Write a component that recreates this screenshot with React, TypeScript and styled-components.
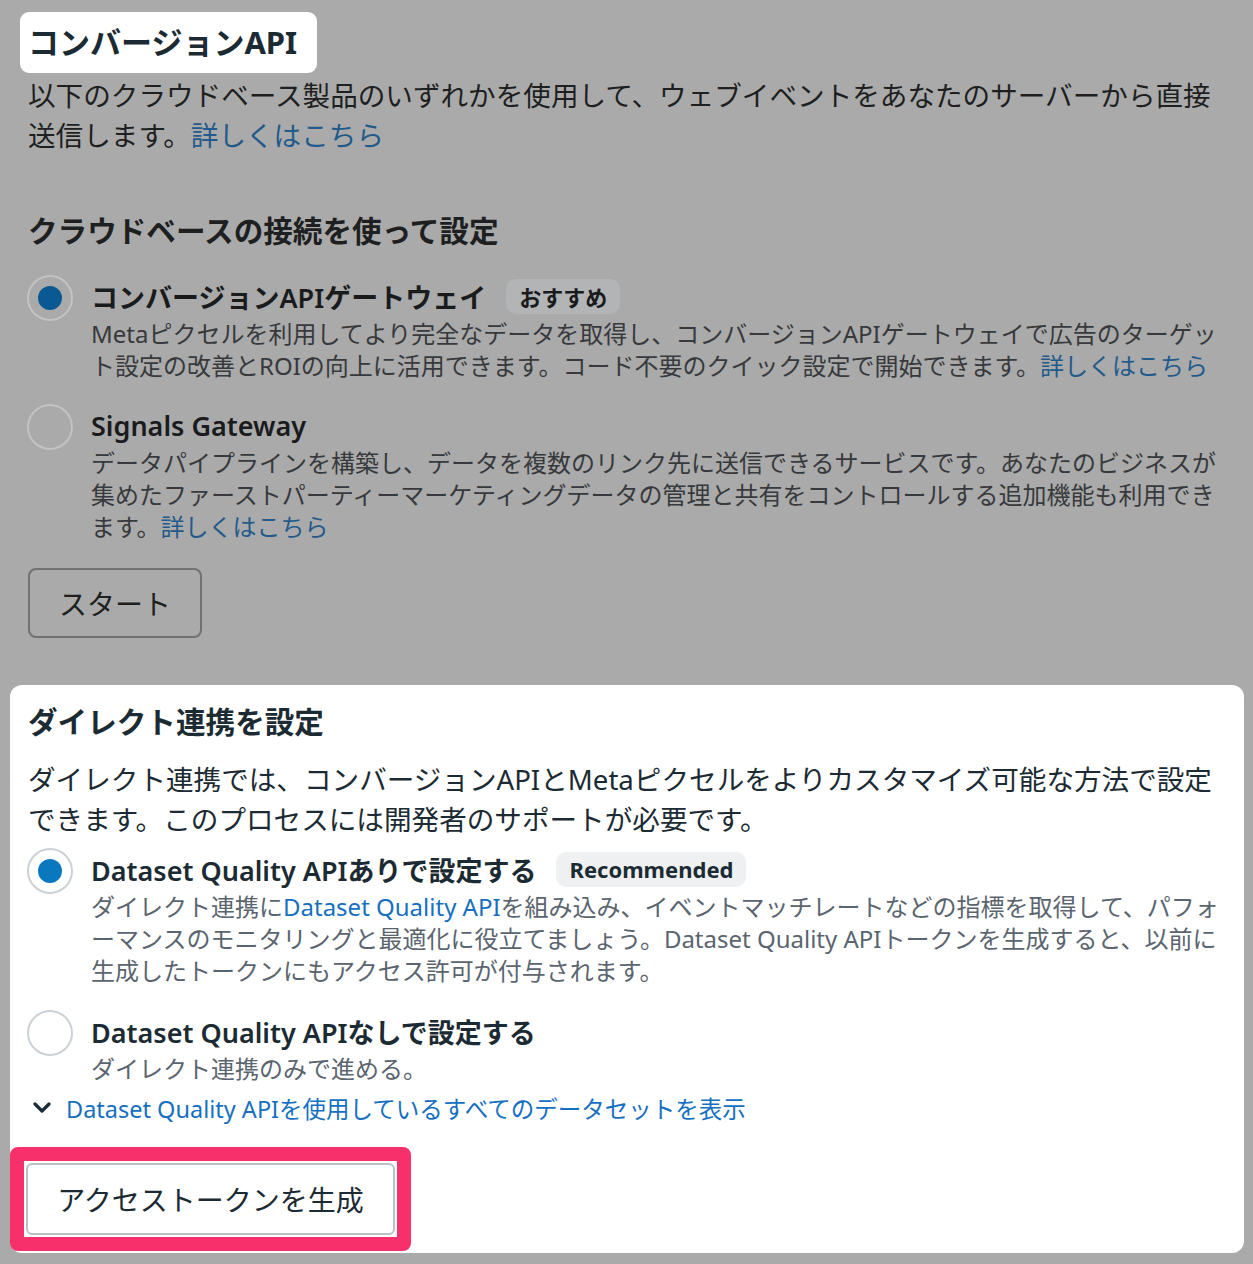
import styled, {createGlobalStyle, css} from 'styled-components'

interface IDim {
    dim?: boolean;
}

interface IRadio extends IDim {
    checked?: boolean;
}

const GlobalStyle = createGlobalStyle`
  html, body {
    margin: 0;
    padding: 0;
    background: #aaaaaa;
  }

  body {
    font-family: "Noto Sans", "Noto Sans CJK JP", sans-serif;
    color: #1c1e21;
  }

  * {
    box-sizing: border-box;
  }
`

const Option = ({dim, checked, label, badge, children}: IRadio & {
    label: string;
    badge?: string;
    children: React.ReactNode
}) => (
    <OptionRow>
        <Radio dim={dim} checked={checked}/>
        <OptionBody>
            <LabelRow>
                <OptionLabel dim={dim}>{label}</OptionLabel>
                {badge && <Badge dim={dim}>{badge}</Badge>}
            </LabelRow>
            <OptionDesc dim={dim}>{children}</OptionDesc>
        </OptionBody>
    </OptionRow>
)

const App = () => {
    return (
        <Page>
            <GlobalStyle/>
            <TopSection>
                <TitleBox>コンバージョンAPI</TitleBox>
                <Intro dim>
                    以下のクラウドベース製品のいずれかを使用して、ウェブイベントをあなたのサーバーから直接<br/>
                    送信します。<Link dim>詳しくはこちら</Link>
                </Intro>
                <SectionHeading dim>クラウドベースの接続を使って設定</SectionHeading>
                <OptionList>
                    <Option dim checked label="コンバージョンAPIゲートウェイ" badge="おすすめ">
                        Metaピクセルを利用してより完全なデータを取得し、コンバージョンAPIゲートウェイで広告のターゲッ<br/>
                        ト設定の改善とROIの向上に活用できます。コード不要のクイック設定で開始できます。<Link dim>詳しくはこちら</Link>
                    </Option>
                    <Option dim label="Signals Gateway">
                        データパイプラインを構築し、データを複数のリンク先に送信できるサービスです。あなたのビジネスが<br/>
                        集めたファーストパーティーマーケティングデータの管理と共有をコントロールする追加機能も利用でき<br/>
                        ます。<Link dim>詳しくはこちら</Link>
                    </Option>
                </OptionList>
                <StartButton>スタート</StartButton>
            </TopSection>

            <Panel>
                <SectionHeading>ダイレクト連携を設定</SectionHeading>
                <PanelIntro>
                    ダイレクト連携では、コンバージョンAPIとMetaピクセルをよりカスタマイズ可能な方法で設定<br/>
                    できます。このプロセスには開発者のサポートが必要です。
                </PanelIntro>
                <PanelOptions>
                    <Option checked label="Dataset Quality APIありで設定する" badge="Recommended">
                        ダイレクト連携に<Link>Dataset Quality API</Link>を組み込み、イベントマッチレートなどの指標を取得して、パフォ<br/>
                        ーマンスのモニタリングと最適化に役立てましょう。Dataset Quality APIトークンを生成すると、以前に<br/>
                        生成したトークンにもアクセス許可が付与されます。
                    </Option>
                    <Option label="Dataset Quality APIなしで設定する">
                        ダイレクト連携のみで進める。
                    </Option>
                </PanelOptions>
                <ExpandRow>
                    <svg width="18" height="12" viewBox="0 0 18 12">
                        <polyline points="2,2 9,9 16,2" fill="none" stroke="#1c2b33" strokeWidth="3.2"
                                  strokeLinecap="round" strokeLinejoin="round"/>
                    </svg>
                    <Link>Dataset Quality APIを使用しているすべてのデータセットを表示</Link>
                </ExpandRow>
                <Highlight>
                    <TokenButton>アクセストークンを生成</TokenButton>
                </Highlight>
            </Panel>
        </Page>
    )
}
export default App

// ==========================================

const Page = styled.div`
  width: 1253px;
  min-height: 1264px;
  padding: 12px 9px 9px 10px;
  background: #aaaaaa;
`

const TopSection = styled.section`
  padding: 0 10px 0 18px;
`

const TitleBox = styled.h1`
  display: inline-block;
  margin: 0 0 0 -8px;
  padding: 0 20px 0 8px;
  height: 61px;
  line-height: 61px;
  border-radius: 9px;
  background: #ffffff;
  font-size: 31px;
  font-weight: 700;
  color: #1c2b33;
`

const Intro = styled.p<IDim>`
  margin: 2px 0 0;
  font-size: 27.6px;
  line-height: 40px;
  white-space: nowrap;
  color: ${(p) => (p.dim ? '#1e1f21' : '#1c2b33')};
`

const PanelIntro = styled(Intro)`
  margin-top: 17px;
`

const SectionHeading = styled.h2<IDim>`
  margin: ${(p) => (p.dim ? '56px' : '0')} 0 0;
  font-size: 29.6px;
  font-weight: 700;
  line-height: 40px;
  color: ${(p) => (p.dim ? '#1e1f21' : '#1c2b33')};
`

const Link = styled.span<IDim>`
  color: ${(p) => (p.dim ? '#235a8c' : '#1670bf')};
`

const OptionList = styled.div`
  margin-top: 24px;
  display: flex;
  flex-direction: column;
  gap: 22px;
`

const PanelOptions = styled(OptionList)`
  margin-top: 9px;
  gap: 23px;
`

const OptionRow = styled.div`
  display: flex;
  align-items: flex-start;
  gap: 18px;
`

const Radio = styled.span<IRadio>`
  flex: 0 0 46px;
  height: 46px;
  margin-left: -1px;
  border-radius: 50%;
  display: flex;
  align-items: center;
  justify-content: center;
  border: 2px solid ${(p) => (p.dim ? '#c3c3c3' : '#ccd1d6')};
  background: ${(p) => (p.dim ? 'transparent' : '#ffffff')};

  ${(p) =>
          p.checked &&
          css<IRadio>`
            &::after {
              content: "";
              width: 24px;
              height: 24px;
              border-radius: 50%;
              background: ${p.dim ? '#0b5993' : '#0a78be'};
            }
          `}
`

const OptionBody = styled.div`
  display: flex;
  flex-direction: column;
`

const LabelRow = styled.div`
  height: 46px;
  margin-top: -2px;
  display: flex;
  align-items: center;
  gap: 20px;
`

const OptionLabel = styled.span<IDim>`
  font-size: 27px;
  font-weight: 600;
  white-space: nowrap;
  color: ${(p) => (p.dim ? '#1a1b1d' : '#1c2b33')};
`

const Badge = styled.span<IDim>`
  height: 35px;
  padding: 0 13px;
  border-radius: 10px;
  display: flex;
  align-items: center;
  font-size: 22px;
  font-weight: 700;
  color: ${(p) => (p.dim ? '#1a1b1d' : '#1c2b33')};
  background: ${(p) => (p.dim ? '#b3b4b6' : '#eef0f2')};
`

const OptionDesc = styled.p<IDim>`
  margin: -1px 0 0;
  font-size: 24px;
  line-height: 32px;
  white-space: nowrap;
  color: ${(p) => (p.dim ? '#37393c' : '#5a6570')};
`

const StartButton = styled.button`
  margin-top: 25px;
  width: 174px;
  height: 70px;
  border: 2px solid #6f7173;
  border-radius: 8px;
  background: transparent;
  font-family: "Noto Sans", "Noto Sans CJK JP", sans-serif;
  font-size: 28px;
  color: #1e1f21;
`

const Panel = styled.section`
  margin-top: 47px;
  width: 1234px;
  padding: 17px 18px 2px 18px;
  border-radius: 12px;
  background: #ffffff;
`

const ExpandRow = styled.div`
  margin: 7px 0 0 5px;
  height: 32px;
  display: flex;
  align-items: center;
  gap: 15px;
  font-size: 23.5px;
  white-space: nowrap;
`

const Highlight = styled.div`
  margin: 23px 0 0 -18px;
  width: fit-content;
  padding: 2px;
  border: 14px solid #f7306c;
  border-radius: 8px;
  background: #ffffff;
`

const TokenButton = styled.button`
  display: block;
  width: 369px;
  height: 72px;
  border: 2px solid #bcc1c6;
  border-radius: 6px;
  background: #ffffff;
  font-family: "Noto Sans", "Noto Sans CJK JP", sans-serif;
  font-size: 28px;
  color: #1c2b33;
`
